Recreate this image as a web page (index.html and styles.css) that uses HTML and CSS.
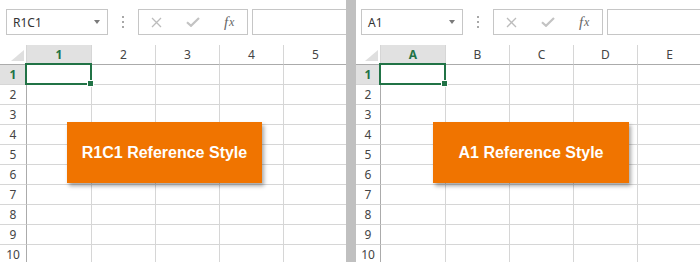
FILE: index.html
```html
<!DOCTYPE html>
<html lang="en">

<head>
  <meta charset="UTF-8" />
  <title>R1C1 vs A1 Reference Style</title>
  <link rel="stylesheet" href="styles.css">
</head>

<body>
  <div class="window">
    <!-- left: R1C1 style -->
    <section class="pane pane-left">
      <div class="formulaBar">
        <div class="nameBox"><span>R1C1</span><i class="caret"></i></div>
        <div class="grip"><i></i><i></i><i></i></div>
        <div class="tools">
          <span class="tool">
            <svg width="11" height="11" viewBox="0 0 11 11"><path d="M1 1L10 10M10 1L1 10" stroke="#bcbcbc" stroke-width="1.3" fill="none" /></svg>
          </span>
          <span class="tool">
            <svg width="14" height="10" viewBox="0 0 14 10"><path d="M1 5.2L5 8.8L13 1" stroke="#c3c3c3" stroke-width="2.2" fill="none" /></svg>
          </span>
          <span class="tool fx">f<sub>x</sub></span>
        </div>
        <div class="formulaInput"></div>
      </div>
      <div class="sheet">
        <div class="row headRow">
          <div class="corner"></div>
          <div class="colHead first selected">1</div>
          <div class="colHead">2</div>
          <div class="colHead">3</div>
          <div class="colHead">4</div>
          <div class="colHead">5</div>
        </div>
        <div class="row">
          <div class="rowHead selected">1</div>
          <div class="cell first active"><span class="selection"><i class="handle"></i></span></div>
          <div class="cell"></div><div class="cell"></div><div class="cell"></div><div class="cell"></div>
        </div>
        <div class="row"><div class="rowHead">2</div><div class="cell first"></div><div class="cell"></div><div class="cell"></div><div class="cell"></div><div class="cell"></div></div>
        <div class="row"><div class="rowHead">3</div><div class="cell first"></div><div class="cell"></div><div class="cell"></div><div class="cell"></div><div class="cell"></div></div>
        <div class="row"><div class="rowHead">4</div><div class="cell first"></div><div class="cell"></div><div class="cell"></div><div class="cell"></div><div class="cell"></div></div>
        <div class="row"><div class="rowHead">5</div><div class="cell first"></div><div class="cell"></div><div class="cell"></div><div class="cell"></div><div class="cell"></div></div>
        <div class="row"><div class="rowHead">6</div><div class="cell first"></div><div class="cell"></div><div class="cell"></div><div class="cell"></div><div class="cell"></div></div>
        <div class="row"><div class="rowHead">7</div><div class="cell first"></div><div class="cell"></div><div class="cell"></div><div class="cell"></div><div class="cell"></div></div>
        <div class="row"><div class="rowHead">8</div><div class="cell first"></div><div class="cell"></div><div class="cell"></div><div class="cell"></div><div class="cell"></div></div>
        <div class="row"><div class="rowHead">9</div><div class="cell first"></div><div class="cell"></div><div class="cell"></div><div class="cell"></div><div class="cell"></div></div>
        <div class="row"><div class="rowHead">10</div><div class="cell first"></div><div class="cell"></div><div class="cell"></div><div class="cell"></div><div class="cell"></div></div>
      </div>
      <div class="callout">R1C1 Reference Style</div>
    </section>

    <div class="splitter"></div>

    <!-- right: A1 style -->
    <section class="pane pane-right">
      <div class="formulaBar">
        <div class="nameBox"><span>A1</span><i class="caret"></i></div>
        <div class="grip"><i></i><i></i><i></i></div>
        <div class="tools">
          <span class="tool">
            <svg width="11" height="11" viewBox="0 0 11 11"><path d="M1 1L10 10M10 1L1 10" stroke="#bcbcbc" stroke-width="1.3" fill="none" /></svg>
          </span>
          <span class="tool">
            <svg width="14" height="10" viewBox="0 0 14 10"><path d="M1 5.2L5 8.8L13 1" stroke="#c3c3c3" stroke-width="2.2" fill="none" /></svg>
          </span>
          <span class="tool fx">f<sub>x</sub></span>
        </div>
        <div class="formulaInput"></div>
      </div>
      <div class="sheet">
        <div class="row headRow">
          <div class="corner"></div>
          <div class="colHead first selected">A</div>
          <div class="colHead">B</div>
          <div class="colHead">C</div>
          <div class="colHead">D</div>
          <div class="colHead">E</div>
        </div>
        <div class="row">
          <div class="rowHead selected">1</div>
          <div class="cell first active"><span class="selection"><i class="handle"></i></span></div>
          <div class="cell"></div><div class="cell"></div><div class="cell"></div><div class="cell"></div>
        </div>
        <div class="row"><div class="rowHead">2</div><div class="cell first"></div><div class="cell"></div><div class="cell"></div><div class="cell"></div><div class="cell"></div></div>
        <div class="row"><div class="rowHead">3</div><div class="cell first"></div><div class="cell"></div><div class="cell"></div><div class="cell"></div><div class="cell"></div></div>
        <div class="row"><div class="rowHead">4</div><div class="cell first"></div><div class="cell"></div><div class="cell"></div><div class="cell"></div><div class="cell"></div></div>
        <div class="row"><div class="rowHead">5</div><div class="cell first"></div><div class="cell"></div><div class="cell"></div><div class="cell"></div><div class="cell"></div></div>
        <div class="row"><div class="rowHead">6</div><div class="cell first"></div><div class="cell"></div><div class="cell"></div><div class="cell"></div><div class="cell"></div></div>
        <div class="row"><div class="rowHead">7</div><div class="cell first"></div><div class="cell"></div><div class="cell"></div><div class="cell"></div><div class="cell"></div></div>
        <div class="row"><div class="rowHead">8</div><div class="cell first"></div><div class="cell"></div><div class="cell"></div><div class="cell"></div><div class="cell"></div></div>
        <div class="row"><div class="rowHead">9</div><div class="cell first"></div><div class="cell"></div><div class="cell"></div><div class="cell"></div><div class="cell"></div></div>
        <div class="row"><div class="rowHead">10</div><div class="cell first"></div><div class="cell"></div><div class="cell"></div><div class="cell"></div><div class="cell"></div></div>
      </div>
      <div class="callout">A1 Reference Style</div>
    </section>
  </div>
</body>

</html>
```

FILE: styles.css
```css
body {
  margin: 0;
  background: #fff;
  font-family: "Noto Sans", "Open Sans", sans-serif;
  color: #444;
}

.window {
  display: flex;
  width: 700px;
  height: 262px;
  overflow: hidden;
}

.pane {
  position: relative;
  overflow: hidden;
  background: #fff;
}

.pane-left {
  width: 346px;
}

.pane-right {
  flex: 1;
}

.splitter {
  width: 10px;
  background: #c0c0c0;
}

/* formula bar */

.formulaBar {
  display: flex;
  height: 45px;
  box-sizing: border-box;
  padding: 9px 0 10px 6px;
}

.pane-right .formulaBar {
  padding-left: 5px;
}

.nameBox,
.tools,
.formulaInput {
  box-sizing: border-box;
  height: 26px;
  border: 1px solid #c6c6c6;
  background: #fff;
}

.nameBox {
  width: 102px;
  display: flex;
  align-items: center;
  justify-content: space-between;
  padding: 0 7px 0 6px;
  font-size: 12px;
  color: #333;
}

.caret {
  width: 0;
  height: 0;
  border-left: 3px solid transparent;
  border-right: 3px solid transparent;
  border-top: 4px solid #7a7a7a;
}

.grip {
  width: 30px;
  display: flex;
  flex-direction: column;
  align-items: center;
  justify-content: center;
  gap: 3px;
}

.grip i {
  width: 2px;
  height: 2px;
  background: #a8a8a8;
}

.tools {
  width: 110px;
  display: flex;
  align-items: center;
}

.tool {
  width: 36px;
  display: flex;
  justify-content: center;
  align-items: center;
}

.fx {
  font-family: "Liberation Serif", serif;
  font-style: italic;
  font-size: 15px;
  color: #666;
  line-height: 1;
  padding-left: 1px;
}

.fx sub {
  font-size: 12px;
  vertical-align: -1px;
  margin-left: 1px;
}

.formulaInput {
  flex: 1;
  margin-left: 4px;
  margin-right: -4px;
}

/* grid */

.sheet {
  display: flex;
  flex-direction: column;
}

.row {
  display: flex;
  height: 20px;
  flex-shrink: 0;
}

.rowHead,
.corner {
  box-sizing: border-box;
  width: 27px;
  flex-shrink: 0;
  border-right: 1px solid #ababab;
  border-bottom: 1px solid #d6d6d6;
}

.pane-right .rowHead,
.pane-right .corner {
  width: 25px;
}

.rowHead {
  font-size: 12px;
  line-height: 19px;
  text-align: center;
}

.corner {
  position: relative;
  border-right: 1px solid #d6d6d6;
  border-bottom: 1px solid #ababab;
}

.corner::after {
  content: "";
  position: absolute;
  right: 2px;
  bottom: 3px;
  width: 0;
  height: 0;
  border-left: 13px solid transparent;
  border-bottom: 11px solid #dfdfdf;
}

.colHead,
.cell {
  box-sizing: border-box;
  width: 64px;
  flex-shrink: 0;
  border-right: 1px solid #d6d6d6;
  border-bottom: 1px solid #d6d6d6;
}

.colHead.first,
.cell.first {
  width: 65px;
}

.colHead {
  font-size: 12px;
  line-height: 19px;
  text-align: center;
  border-bottom-color: #ababab;
}

.selected {
  background: #e1e1e1;
  color: #217346;
  font-weight: bold;
}

.active {
  position: relative;
}

.selection {
  position: absolute;
  left: -2px;
  top: -2px;
  width: 67px;
  height: 22px;
  box-sizing: border-box;
  border: 2px solid #217346;
}

.handle {
  position: absolute;
  right: -4px;
  bottom: -4px;
  width: 5px;
  height: 5px;
  background: #217346;
  border: 1px solid #fff;
}

/* orange label */

.callout {
  position: absolute;
  top: 122px;
  left: 67px;
  width: 195px;
  height: 61px;
  display: flex;
  align-items: center;
  justify-content: center;
  background: #f07400;
  color: #fff;
  font-family: "Liberation Sans", Arial, sans-serif;
  font-weight: bold;
  font-size: 16px;
  box-shadow: 2px 3px 4px rgba(0, 0, 0, 0.35);
}

.pane-right .callout {
  left: 77px;
  width: 196px;
}
```
